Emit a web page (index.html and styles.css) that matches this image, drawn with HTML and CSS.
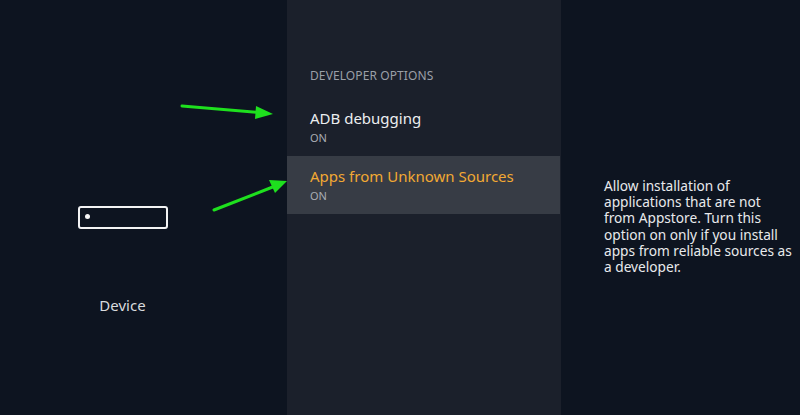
FILE: index.html
```html
<!DOCTYPE html>
<html>
<head>
<meta charset="utf-8">
<link rel="stylesheet" href="styles.css">
</head>
<body>
<div class="screen">
  <div class="left">
    <div class="device-icon"><span class="led"></span></div>
    <div class="device-label">Device</div>
  </div>
  <div class="middle">
    <div class="section-title">DEVELOPER OPTIONS</div>
    <div class="row">
      <div class="row-title">ADB debugging</div>
      <div class="row-sub">ON</div>
    </div>
    <div class="row selected">
      <div class="row-title">Apps from Unknown Sources</div>
      <div class="row-sub">ON</div>
    </div>
  </div>
  <div class="right">
    <p class="desc">Allow installation of applications that are not from Appstore. Turn this option on only if you install apps from reliable sources as a developer.</p>
  </div>
  <svg class="arrows" width="800" height="415" viewBox="0 0 800 415">
    <line x1="182" y1="106" x2="260" y2="112.5" stroke="#1ee01e" stroke-width="3" stroke-linecap="round"/>
    <polygon points="273,114 256,106 255,119" fill="#1ee01e"/>
    <line x1="214" y1="210" x2="274" y2="186.5" stroke="#1ee01e" stroke-width="3" stroke-linecap="round"/>
    <polygon points="287,181 269,180 275,193" fill="#1ee01e"/>
  </svg>
</div>
</body>
</html>
```

FILE: styles.css
```css
* { box-sizing: border-box; }
html, body { margin: 0; padding: 0; }
body {
  width: 800px;
  height: 415px;
  overflow: hidden;
  background: #0d1420;
  font-family: "Noto Sans", "Open Sans", sans-serif;
}
.screen {
  position: relative;
  display: grid;
  grid-template-columns: 287px 274px 1fr;
  height: 415px;
}
.left {
  display: flex;
  flex-direction: column;
  align-items: center;
  padding-right: 42px;
  padding-top: 206px;
}
.device-icon {
  width: 90px;
  height: 23px;
  border: 2px solid #f2f3f4;
  border-radius: 3px;
  display: flex;
  align-items: center;
  padding-left: 5px;
}
.led {
  width: 5px;
  height: 5px;
  border-radius: 50%;
  background: #f5f5f5;
  margin-top: -3px;
}
.device-label {
  margin-top: 66px;
  color: #d9dbde;
  font-size: 15px;
  line-height: 20px;
}
.middle {
  background: #1b202b;
  padding-top: 68px;
}
.section-title {
  padding-left: 23px;
  color: #9a9fa7;
  font-size: 12px;
  line-height: 16px;
  letter-spacing: 0.1px;
  margin-bottom: 14px;
}
.row {
  height: 58px;
  padding-left: 23px;
  padding-top: 9px;
}
.row.selected {
  background: #373c45;
  margin-right: 1px;
}
.row-title {
  color: #eceef0;
  font-size: 15px;
  line-height: 22px;
  margin-bottom: 2px;
}
.row.selected .row-title { color: #f2a933; }
.row-sub {
  color: #a9adb3;
  font-size: 11px;
  line-height: 14px;
}
.right {
  padding-left: 43px;
  padding-top: 178px;
}
.desc {
  margin: 0;
  width: 188px;
  color: #e8eaec;
  font-size: 13.7px;
  line-height: 16.2px;
}
.arrows {
  position: absolute;
  left: 0;
  top: 0;
  pointer-events: none;
}
```
